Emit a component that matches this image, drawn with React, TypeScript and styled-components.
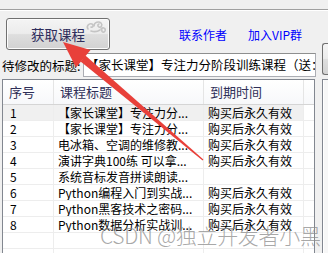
import { createGlobalStyle, styled } from "styled-components";

const GlobalStyle = createGlobalStyle`
  html, body {
    margin: 0;
    padding: 0;
    background: #f0f0f0;
  }
  body {
    font-family: "Noto Sans CJK SC", "Noto Sans", sans-serif;
  }
`;

const courses = [
  { id: 1, title: "【家长课堂】专注力分...", expire: "购买后永久有效" },
  { id: 2, title: "【家长课堂】专注力分...", expire: "购买后永久有效" },
  { id: 3, title: "电冰箱、空调的维修教...", expire: "购买后永久有效" },
  { id: 4, title: "演讲字典100练 可以拿...", expire: "购买后永久有效" },
  { id: 5, title: "系统音标发音拼读朗读...", expire: "" },
  { id: 6, title: "Python编程入门到实战...", expire: "购买后永久有效" },
  { id: 7, title: "Python黑客技术之密码...", expire: "购买后永久有效" },
  { id: 8, title: "Python数据分析实战训...", expire: "购买后永久有效" },
];

export default function App() {
  return (
    <>
      <GlobalStyle />
      <Window>
        <TopRule />
        <Body>
          <Main>
            <Toolbar>
              <FetchButton>
                <Swirl />
                获取课程
              </FetchButton>
              <Link $gap={69}>联系作者</Link>
              <Link $gap={21}>加入VIP群</Link>
            </Toolbar>
            <TitleRow>
              <Label>待修改的标题:</Label>
              <TitleInput>【家长课堂】专注力分阶段训练课程（送：电子版</TitleInput>
            </TitleRow>
            <ListView>
              <HeaderRow>
                <HeaderCell>序号</HeaderCell>
                <HeaderCell>课程标题</HeaderCell>
                <HeaderCell>到期时间</HeaderCell>
                <HeaderCell />
              </HeaderRow>
              {courses.map((c) => (
                <Row key={c.id}>
                  <Cell $selected={c.id === 1} $pad={7}>
                    {c.id}
                  </Cell>
                  <Cell $selected={c.id === 1}>{c.title}</Cell>
                  <Cell $selected={c.id === 1}>{c.expire}</Cell>
                  <Cell />
                </Row>
              ))}
              {[0, 1, 2].map((i) => (
                <Row key={"empty" + i}>
                  <Cell />
                  <Cell />
                  <Cell />
                  <Cell />
                </Row>
              ))}
            </ListView>
          </Main>
          <Side>
            <SideButton />
            <SideList />
          </Side>
        </Body>
        <Arrow />
        <Watermark>CSDN @独立开发者小黑</Watermark>
      </Window>
    </>
  );
}

function Swirl() {
  return (
    <SwirlSvg width="22" height="14" viewBox="0 0 22 14">
      <g fill="none" stroke="#c4c4c4" strokeWidth="1.6" strokeLinecap="round">
        <path d="M3 9 C1 6 4 3 7 4 C9 5 8 8 6 7" />
        <path d="M9 6 C9 2 14 1 16 3 C18 5 16 8 14 7 C12 6 13 4 14 4" />
        <path d="M16 9 C18 7 21 8 20 11 C19 13 16 12 17 10" />
        <path d="M6 11 C9 12 12 12 15 10" />
      </g>
    </SwirlSvg>
  );
}

function Arrow() {
  return (
    <ArrowSvg width="328" height="253" viewBox="0 0 328 253">
      <g fill="#e8403a">
        <polygon points="63,42 90.5,50 76,67.5" />
        <polygon points="80.6,61.5 85.4,55.4 203.4,159.4 202.6,160.5" />
      </g>
    </ArrowSvg>
  );
}

const Window = styled.div`
  position: relative;
  width: 328px;
  height: 253px;
  overflow: hidden;
  background: #f0f0f0;
`;

const TopRule = styled.div`
  margin-top: 9px;
  border-top: 1px solid #a0a0a0;
  border-bottom: 1px solid #ffffff;
`;

const Body = styled.div`
  display: flex;
  gap: 6px;
`;

const Main = styled.div`
  width: 316px;
  flex: none;
  display: flex;
  flex-direction: column;
`;

const Toolbar = styled.div`
  height: 42px;
  box-sizing: border-box;
  padding: 7px 0 0 6px;
  display: flex;
  align-items: flex-start;
`;

const FetchButton = styled.button`
  position: relative;
  width: 104px;
  height: 32px;
  padding: 0;
  border: 1px solid #707070;
  border-radius: 3px;
  background: linear-gradient(
    to bottom,
    #f4f4f4 0%,
    #ececec 48%,
    #dedede 52%,
    #d2d2d2 100%
  );
  box-shadow: inset 0 0 0 1px #fcfcfc;
  font-family: "Noto Sans CJK SC", sans-serif;
  font-size: 13.5px;
  color: #2e2d5c;
  line-height: 30px;
`;

const SwirlSvg = styled.svg`
  position: absolute;
  top: 1px;
  right: 2px;
`;

const Link = styled.span<{ $gap: number }>`
  margin-left: ${(p) => p.$gap}px;
  height: 32px;
  line-height: 34px;
  font-size: 12px;
  color: #0000ff;
  white-space: nowrap;
`;

const TitleRow = styled.div`
  height: 24px;
  display: flex;
  align-items: center;
  gap: 2px;
`;

const Label = styled.span`
  padding-left: 2px;
  width: 79px;
  font-size: 12.5px;
  color: #000000;
  white-space: nowrap;
  overflow: hidden;
`;

const TitleInput = styled.div`
  flex: 1;
  height: 24px;
  box-sizing: border-box;
  border: 1px solid #abadb3;
  border-top-color: #8e8f8f;
  background: #ffffff;
  padding-left: 2px;
  font-size: 12.5px;
  line-height: 22px;
  color: #000000;
  white-space: nowrap;
  overflow: hidden;
`;

const ListView = styled.div`
  margin: 2px 0 0 2px;
  width: 313px;
  box-sizing: border-box;
  border: 1px solid #828790;
  background: #ffffff;
`;

const columns = "51px 150px 100px 1fr";

const HeaderRow = styled.div`
  display: grid;
  grid-template-columns: ${columns};
  height: 24px;
  border-bottom: 1px solid #d5d5d5;
  background: linear-gradient(to bottom, #ffffff 0%, #f7f8fa 100%);
`;

const HeaderCell = styled.div`
  border-right: 1px solid #e5e5e5;
  padding-left: 6px;
  font-size: 13px;
  line-height: 23px;
  color: #2f2f58;
  white-space: nowrap;
  &:last-child {
    border-right: none;
  }
`;

const Row = styled.div`
  display: grid;
  grid-template-columns: ${columns};
  height: 16px;
  box-sizing: border-box;
  border-bottom: 1px solid #ededed;
`;

const Cell = styled.div<{ $selected?: boolean; $pad?: number }>`
  border-right: 1px solid #ededed;
  padding-left: ${(p) => p.$pad ?? 4}px;
  background: ${(p) => (p.$selected ? "#f0f0f0" : "#ffffff")};
  font-size: 12px;
  line-height: 15px;
  color: #000000;
  white-space: nowrap;
  overflow: hidden;
  &:last-child {
    border-right: none;
  }
`;

const Side = styled.div`
  flex: 1;
  padding-top: 32px;
  display: flex;
  flex-direction: column;
  gap: 4px;
`;

const SideButton = styled.div`
  height: 32px;
  box-sizing: border-box;
  border: 1px solid #707070;
  border-right: none;
  border-radius: 3px 0 0 3px;
  background: linear-gradient(to bottom, #f4f4f4, #ececec 48%, #dedede 52%, #d2d2d2);
`;

const SideList = styled.div`
  height: 200px;
  border-left: 1px solid #828790;
  border-top: 1px solid #828790;
  background: #f7f7f7;
  box-shadow: inset 1px 0 0 #ffffff;
`;

const ArrowSvg = styled.svg`
  position: absolute;
  top: 0;
  left: 0;
  pointer-events: none;
`;

const Watermark = styled.div`
  position: absolute;
  left: 100px;
  top: 220px;
  font-size: 21px;
  font-weight: 300;
  color: rgba(140, 140, 140, 0.75);
  white-space: nowrap;
  pointer-events: none;
  letter-spacing: -0.3px;
`;
